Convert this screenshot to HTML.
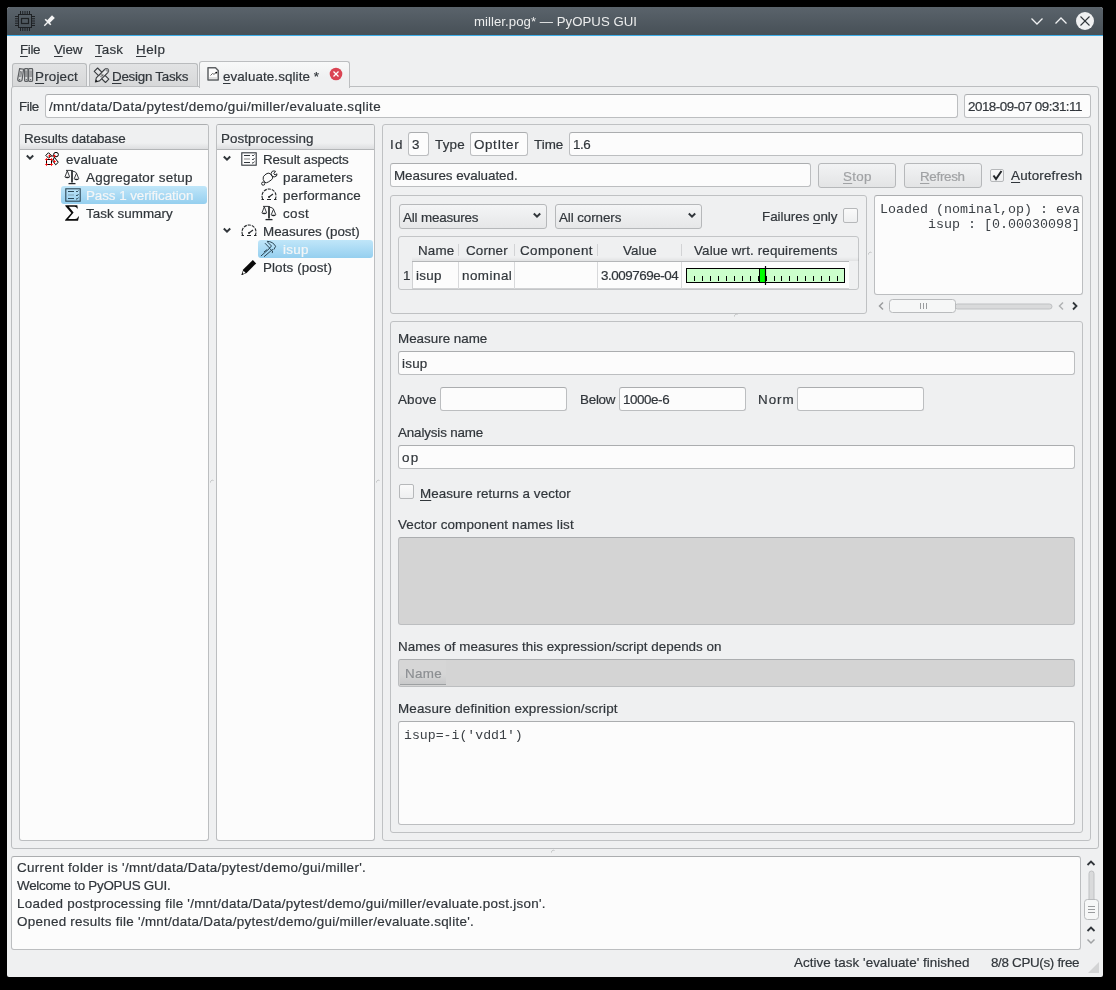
<!DOCTYPE html><html><head><meta charset="utf-8"><style>
*{box-sizing:border-box;margin:0;padding:0}
html,body{width:1116px;height:990px;overflow:hidden;background:#000}
body{position:relative;font-family:'Liberation Sans',sans-serif}
.t{position:absolute;line-height:1;white-space:nowrap;-webkit-text-stroke:0.2px currentColor}
.m{-webkit-text-stroke:0;color:#3c4146 !important}
.b{position:absolute}
.win{position:absolute;left:7px;top:7px;width:1096px;height:970px;background:#eff0f1;border-radius:3px 3px 2px 2px;overflow:hidden}
.edit{position:absolute;background:#fcfcfc;border:1px solid #bcbec0;border-top-color:#abadaf;border-radius:3px}
.grp{position:absolute;border:1px solid #bfc1c3;border-radius:3px}
.btn{position:absolute;border:1px solid #b6b8ba;border-radius:3px;background:linear-gradient(#f2f3f4,#e3e4e5)}
.cb{position:absolute;border:1px solid #b6b8ba;border-radius:2px;background:linear-gradient(#fafafa,#eeeff0)}
u{text-decoration:underline;text-decoration-thickness:1px;text-underline-offset:2px}
</style></head><body><div id="root" style="position:absolute;left:0;top:0;width:1116px;height:990px;will-change:transform"><div class="win"></div>
<div class="b" style="left:7px;top:7px;width:1096px;height:28px;background:linear-gradient(#5a636b,#475057);border-radius:3px 3px 0 0"></div>
<div class="b" style="left:7px;top:35px;width:1096px;height:1px;background:#3daee9"></div>
<div class="t" style="left:474px;top:15px;font-size:13.2px;color:#eceded;font-family:'Liberation Sans', sans-serif;letter-spacing:0.045px;-webkit-text-stroke:0">miller.pog* — PyOPUS GUI</div>
<svg class="b" style="left:0px;top:0px;" width="60" height="36" viewBox="0 0 60 36"><g stroke="#1e2124" stroke-width="1" fill="none"><rect x="18.5" y="14.5" width="13" height="13"/><rect x="21.5" y="18.5" width="7" height="5" stroke-width="1.2"/><line x1="20.5" y1="11" x2="20.5" y2="14"/><line x1="20.5" y1="28" x2="20.5" y2="31"/><line x1="22.75" y1="11" x2="22.75" y2="14"/><line x1="22.75" y1="28" x2="22.75" y2="31"/><line x1="25" y1="11" x2="25" y2="14"/><line x1="25" y1="28" x2="25" y2="31"/><line x1="27.25" y1="11" x2="27.25" y2="14"/><line x1="27.25" y1="28" x2="27.25" y2="31"/><line x1="29.5" y1="11" x2="29.5" y2="14"/><line x1="29.5" y1="28" x2="29.5" y2="31"/><line x1="15" y1="16.5" x2="18" y2="16.5"/><line x1="32" y1="16.5" x2="35" y2="16.5"/><line x1="15" y1="18.75" x2="18" y2="18.75"/><line x1="32" y1="18.75" x2="35" y2="18.75"/><line x1="15" y1="21" x2="18" y2="21"/><line x1="32" y1="21" x2="35" y2="21"/><line x1="15" y1="23.25" x2="18" y2="23.25"/><line x1="32" y1="23.25" x2="35" y2="23.25"/><line x1="15" y1="25.5" x2="18" y2="25.5"/><line x1="32" y1="25.5" x2="35" y2="25.5"/></g><g stroke="#f4f4f4" fill="#f4f4f4"><line x1="44.3" y1="25.7" x2="47.8" y2="22.2" stroke-width="1.3"/><line x1="45.2" y1="19.2" x2="50.8" y2="24.8" stroke-width="1.6"/><path d="M47 20.5 L52 15.3 L54.8 18 L49.5 23.2 Z" stroke="none"/></g></svg>
<svg class="b" style="left:1025px;top:10px;" width="75" height="22" viewBox="0 0 75 22"><g stroke="#f0f1f2" stroke-width="1.3" fill="none"><path d="M6.5 8.5 L12 14 L17.5 8.5"/><path d="M30.5 13.5 L36 8 L41.5 13.5"/></g><circle cx="60" cy="11" r="9" fill="#eff0f1"/><g stroke="#31363b" stroke-width="1.1"><line x1="55.5" y1="6.5" x2="64.5" y2="15.5"/><line x1="64.5" y1="6.5" x2="55.5" y2="15.5"/></g></svg>
<div class="t" style="left:20px;top:43px;font-size:13.4px;color:#31363b;font-family:'Liberation Sans', sans-serif;letter-spacing:-0.359px;"><u>F</u>ile</div>
<div class="t" style="left:54px;top:43px;font-size:13.4px;color:#31363b;font-family:'Liberation Sans', sans-serif;letter-spacing:-0.094px;"><u>V</u>iew</div>
<div class="t" style="left:95px;top:43px;font-size:13.4px;color:#31363b;font-family:'Liberation Sans', sans-serif;letter-spacing:0.156px;"><u>T</u>ask</div>
<div class="t" style="left:136px;top:43px;font-size:13.4px;color:#31363b;font-family:'Liberation Sans', sans-serif;letter-spacing:0.487px;"><u>H</u>elp</div>
<div class="b" style="left:12px;top:63px;width:75px;height:24px;border:1px solid #b9bbbd;border-bottom:none;border-radius:3px 3px 0 0;background:linear-gradient(#e2e3e4,#d6d7d8)"></div>
<div class="b" style="left:89px;top:63px;width:109px;height:24px;border:1px solid #b9bbbd;border-bottom:none;border-radius:3px 3px 0 0;background:linear-gradient(#e2e3e4,#d6d7d8)"></div>
<div class="b" style="left:11px;top:86px;width:1088px;height:763px;border:1px solid #bcbec0;border-radius:3px"></div>
<div class="b" style="left:199px;top:61px;width:151px;height:27px;border:1px solid #bcbec0;border-bottom:none;border-radius:3px 3px 0 0;background:linear-gradient(#f8f9f9,#eff0f1 60%)"></div>
<div class="t" style="left:35px;top:70px;font-size:13.4px;color:#31363b;font-family:'Liberation Sans', sans-serif;letter-spacing:0.187px;"><u>P</u>roject</div>
<div class="t" style="left:112px;top:70px;font-size:13.4px;color:#31363b;font-family:'Liberation Sans', sans-serif;letter-spacing:-0.266px;"><u>D</u>esign Tasks</div>
<div class="t" style="left:223px;top:70px;font-size:13.4px;color:#31363b;font-family:'Liberation Sans', sans-serif;letter-spacing:0.091px;"><u>e</u>valuate.sqlite *</div>
<svg class="b" style="left:14px;top:64px;" width="22" height="22" viewBox="0 0 22 22"><g stroke="#5c5f62" stroke-width="1.2" fill="none"><path d="M5.6 4.6 L9.6 5.2 L8 16.3 Q7.2 17.8 5 17.3 Q3.6 16.5 3.7 15.2 Z"/><rect x="10.6" y="4.6" width="3.4" height="12.8" rx="0.8"/><rect x="14.6" y="4.6" width="4" height="12.8" rx="0.8"/></g><g stroke="#5c5f62" stroke-width="0.7" fill="none"><path d="M11.8 6.5 V13 M12.9 6.5 V13 M16 6.5 V13 M17.2 6.5 V13 M6.6 7 L5.6 13 M7.8 7.2 L6.8 13"/></g><g fill="#5c5f62"><circle cx="12.3" cy="15.6" r="0.7"/><circle cx="16.6" cy="15.6" r="0.7"/><circle cx="5.6" cy="15.8" r="0.8"/></g></svg>
<svg class="b" style="left:91px;top:64px;" width="22" height="22" viewBox="0 0 22 22"><defs><pattern id="chk" width="1.4" height="1.4" patternUnits="userSpaceOnUse"><rect width="0.7" height="0.7" fill="#555"/><rect x="0.7" y="0.7" width="0.7" height="0.7" fill="#555"/></pattern></defs><g stroke="#3a3d40" stroke-width="1.1" fill="#e4e5e6" stroke-linejoin="round"><path d="M3.2 7.3 L6.6 4 L17.8 15.2 L14.5 18.5 Z"/><path d="M5.3 13.8 L13.6 5.5 Q15.3 3.8 17 5.2 Q18.4 6.9 16.8 8.6 L8.5 16.9 L4.4 18 Z" fill="#e9eaeb"/></g><path d="M7.8 11.2 L10.6 8.4 L13.4 11.2 L10.6 14 Z" fill="url(#chk)"/><path d="M13.6 5.5 Q15.3 3.8 17 5.2 Q18.4 6.9 16.8 8.6 Z" fill="#9a9c9e"/><path d="M4.4 18 L5 15.6 L6.8 17.4 Z" fill="#111"/></svg>
<svg class="b" style="left:203px;top:63px;" width="22" height="22" viewBox="0 0 22 22"><g stroke="#5e6164" stroke-width="1.5" fill="#fcfcfc"><path d="M5 4.8 H12.5 L15.2 7.5 V17 H5 Z" stroke-linejoin="round"/></g><path d="M7.5 12.5 L9.5 10.5 L11 11.3 L13.3 9.5" stroke="#666" stroke-width="1" fill="none"/><circle cx="13.3" cy="9.6" r="0.9" fill="#000"/><line x1="6" y1="15" x2="14.5" y2="15" stroke="#c8c8c8" stroke-width="1"/></svg>
<svg class="b" style="left:329px;top:67px;" width="14" height="14" viewBox="0 0 14 14"><circle cx="7" cy="7" r="6.3" fill="#da4453"/><g stroke="#fff" stroke-width="1.3"><line x1="4.5" y1="4.5" x2="9.5" y2="9.5"/><line x1="9.5" y1="4.5" x2="4.5" y2="9.5"/></g></svg>
<div class="t" style="left:19px;top:100px;font-size:13.4px;color:#31363b;font-family:'Liberation Sans', sans-serif;letter-spacing:-0.459px;">File</div>
<div class="edit" style="left:45px;top:94px;width:913px;height:24px;"></div>
<div class="t" style="left:49px;top:100px;font-size:13.4px;color:#31363b;font-family:'Liberation Sans', sans-serif;letter-spacing:0.394px;">/mnt/data/Data/pytest/demo/gui/miller/evaluate.sqlite</div>
<div class="edit" style="left:964px;top:94px;width:127px;height:24px;"></div>
<div class="t" style="left:968px;top:100px;font-size:13.4px;color:#31363b;font-family:'Liberation Sans', sans-serif;letter-spacing:-0.491px;">2018-09-07 09:31:11</div>
<div class="b" style="left:19px;top:124px;width:190px;height:717px;border:1px solid #bcbec0;border-top-color:#acaeb0;border-radius:3px;background:#fcfcfc"></div>
<div class="b" style="left:20px;top:125px;width:188px;height:24px;background:linear-gradient(#eff0f1 75%,#dddee0);border-radius:2px 2px 0 0"></div>
<div class="b" style="left:20px;top:149px;width:188px;height:1px;background:#b4b6b8"></div>
<div class="t" style="left:24px;top:132px;font-size:13.4px;color:#31363b;font-family:'Liberation Sans', sans-serif;letter-spacing:-0.118px;">Results database</div>
<div class="b" style="left:216px;top:124px;width:159px;height:717px;border:1px solid #bcbec0;border-top-color:#acaeb0;border-radius:3px;background:#fcfcfc"></div>
<div class="b" style="left:217px;top:125px;width:157px;height:24px;background:linear-gradient(#eff0f1 75%,#dddee0);border-radius:2px 2px 0 0"></div>
<div class="b" style="left:217px;top:149px;width:157px;height:1px;background:#b4b6b8"></div>
<div class="t" style="left:221px;top:132px;font-size:13.4px;color:#31363b;font-family:'Liberation Sans', sans-serif;letter-spacing:0.073px;">Postprocessing</div>
<div class="b" style="left:61px;top:186px;width:146px;height:18px;background:linear-gradient(#c0e6f9,#95cfef);border-radius:3px"></div>
<div class="b" style="left:258px;top:240px;width:115px;height:18px;background:linear-gradient(#c0e6f9,#95cfef);border-radius:3px"></div>
<div class="t" style="left:66px;top:153px;font-size:13.4px;color:#31363b;font-family:'Liberation Sans', sans-serif;letter-spacing:0.168px;">evaluate</div>
<div class="t" style="left:86px;top:171px;font-size:13.4px;color:#31363b;font-family:'Liberation Sans', sans-serif;letter-spacing:0.251px;">Aggregator setup</div>
<div class="t" style="left:86px;top:189px;font-size:13.4px;color:#f4f6f7;font-family:'Liberation Sans', sans-serif;letter-spacing:-0.070px;">Pass 1 verification</div>
<div class="t" style="left:86px;top:207px;font-size:13.4px;color:#31363b;font-family:'Liberation Sans', sans-serif;letter-spacing:0.045px;">Task summary</div>
<div class="t" style="left:263px;top:153px;font-size:13.4px;color:#31363b;font-family:'Liberation Sans', sans-serif;letter-spacing:-0.156px;">Result aspects</div>
<div class="t" style="left:283px;top:171px;font-size:13.4px;color:#31363b;font-family:'Liberation Sans', sans-serif;letter-spacing:0.219px;">parameters</div>
<div class="t" style="left:283px;top:189px;font-size:13.4px;color:#31363b;font-family:'Liberation Sans', sans-serif;letter-spacing:0.263px;">performance</div>
<div class="t" style="left:283px;top:207px;font-size:13.4px;color:#31363b;font-family:'Liberation Sans', sans-serif;letter-spacing:0.414px;">cost</div>
<div class="t" style="left:263px;top:225px;font-size:13.4px;color:#31363b;font-family:'Liberation Sans', sans-serif;letter-spacing:-0.003px;">Measures (post)</div>
<div class="t" style="left:283px;top:243px;font-size:13.4px;color:#f4f6f7;font-family:'Liberation Sans', sans-serif;letter-spacing:0.278px;">isup</div>
<div class="t" style="left:263px;top:261px;font-size:13.4px;color:#31363b;font-family:'Liberation Sans', sans-serif;letter-spacing:0.107px;">Plots (post)</div>
<svg class="b" style="left:25px;top:153px;" width="10" height="8" viewBox="0 0 10 8"><path d="M1.8 2.5 L5 5.7 L8.2 2.5" stroke="#31363b" stroke-width="2" fill="none"/></svg>
<svg class="b" style="left:222px;top:154px;" width="10" height="8" viewBox="0 0 10 8"><path d="M1.8 2.5 L5 5.7 L8.2 2.5" stroke="#31363b" stroke-width="2" fill="none"/></svg>
<svg class="b" style="left:222px;top:226px;" width="10" height="8" viewBox="0 0 10 8"><path d="M1.8 2.5 L5 5.7 L8.2 2.5" stroke="#31363b" stroke-width="2" fill="none"/></svg>
<svg class="b" style="left:42px;top:150px;" width="20" height="18" viewBox="0 0 20 18"><g stroke="#000" stroke-width="1" fill="none"><rect x="4.5" y="9.5" width="5" height="5"/><path d="M3.8 5.4 L6.5 2.7 L9.3 5.5 L6.6 8.2 Z"/><line x1="9" y1="6" x2="12.5" y2="6"/><ellipse cx="14" cy="4.6" rx="2.4" ry="2.2"/><path d="M12.3 7.2 L16.3 12.3 L13.7 14.8 L10.8 11 Z"/></g><path d="M4.5 7.7 L5.1 8.9 L6.3 9.5 L5.1 10.1 L4.5 11.3 L3.9 10.1 L2.7 9.5 L3.9 8.9 Z" fill="#ff0000"/><path d="M9.5 7.7 L10.1 8.9 L11.3 9.5 L10.1 10.1 L9.5 11.3 L8.9 10.1 L7.7 9.5 L8.9 8.9 Z" fill="#ff0000"/><path d="M4.5 12.7 L5.1 13.9 L6.3 14.5 L5.1 15.1 L4.5 16.3 L3.9 15.1 L2.7 14.5 L3.9 13.9 Z" fill="#ff0000"/><path d="M9.5 12.7 L10.1 13.9 L11.3 14.5 L10.1 15.1 L9.5 16.3 L8.9 15.1 L7.7 14.5 L8.9 13.9 Z" fill="#ff0000"/><path d="M7.5 4.2 L8.1 5.4 L9.3 6 L8.1 6.6 L7.5 7.8 L6.9 6.6 L5.7 6 L6.9 5.4 Z" fill="#ff0000"/><path d="M12.5 4.2 L13.1 5.4 L14.3 6 L13.1 6.6 L12.5 7.8 L11.9 6.6 L10.7 6 L11.9 5.4 Z" fill="#ff0000"/><path d="M12.5 9.7 L13.1 10.9 L14.3 11.5 L13.1 12.1 L12.5 13.3 L11.9 12.1 L10.7 11.5 L11.9 10.9 Z" fill="#ff0000"/></svg>
<svg class="b" style="left:62px;top:168px;" width="20" height="18" viewBox="0 0 20 18"><g stroke="#232629" fill="none" stroke-width="0.9"><path d="M4 2.4 L9.5 2.4 M10.5 3.1 Q13.3 3.4 14.8 5.3"/><path d="M5.3 2.8 L3 8.8 M5.3 2.8 L7.6 8.8 M14.5 5.2 L12.2 10.8 M14.5 5.2 L16.8 10.8"/></g><line x1="10" y1="2" x2="10" y2="14.5" stroke="#232629" stroke-width="1.7"/><line x1="6.5" y1="15.6" x2="13.5" y2="15.6" stroke="#232629" stroke-width="1.3"/><path d="M2.4 8.7 Q5.3 12 8.2 8.7 Z" fill="#232629"/><path d="M11.7 10.7 Q14.5 14 17.3 10.7 Z" fill="#232629"/></svg>
<svg class="b" style="left:259px;top:204px;" width="20" height="18" viewBox="0 0 20 18"><g stroke="#232629" fill="none" stroke-width="0.9"><path d="M4 2.4 L9.5 2.4 M10.5 3.1 Q13.3 3.4 14.8 5.3"/><path d="M5.3 2.8 L3 8.8 M5.3 2.8 L7.6 8.8 M14.5 5.2 L12.2 10.8 M14.5 5.2 L16.8 10.8"/></g><line x1="10" y1="2" x2="10" y2="14.5" stroke="#232629" stroke-width="1.7"/><line x1="6.5" y1="15.6" x2="13.5" y2="15.6" stroke="#232629" stroke-width="1.3"/><path d="M2.4 8.7 Q5.3 12 8.2 8.7 Z" fill="#232629"/><path d="M11.7 10.7 Q14.5 14 17.3 10.7 Z" fill="#232629"/></svg>
<svg class="b" style="left:62px;top:186px;" width="20" height="18" viewBox="0 0 20 18"><rect x="3.8" y="2.8" width="14.4" height="12.4" stroke="#2c4756" stroke-width="1.1" fill="none"/><g stroke="#2c4756" stroke-width="1"><line x1="6" y1="5.5" x2="12" y2="5.5"/><line x1="6" y1="12.5" x2="12" y2="12.5"/></g><line x1="6" y1="9" x2="12" y2="9" stroke="#8fb3c8" stroke-width="1.4"/><path d="M14 5 L15 6 L16.5 4.5 M14 9 L15 10 L16.5 8 M14 12.5 L15 13.3 L16.5 11.5" stroke="#2c4756" stroke-width="0.9" fill="none"/></svg>
<svg class="b" style="left:238px;top:150px;" width="20" height="18" viewBox="0 0 20 18"><rect x="3.8" y="2.8" width="14.4" height="12.4" stroke="#31363b" stroke-width="1.1" fill="none"/><g stroke="#31363b" stroke-width="1"><line x1="6" y1="5.5" x2="12" y2="5.5"/><line x1="6" y1="12.5" x2="12" y2="12.5"/></g><line x1="6" y1="9" x2="12" y2="9" stroke="#a8a8a8" stroke-width="1.4"/><path d="M14 5 L15 6 L16.5 4.5 M14 9 L15 10 L16.5 8 M14 12.5 L15 13.3 L16.5 11.5" stroke="#31363b" stroke-width="0.9" fill="none"/></svg>
<svg class="b" style="left:62px;top:204px;" width="20" height="18" viewBox="0 0 20 18"><path d="M3.3 1.2 H15.3 L15.8 4.4 H15.1 Q14.6 2.8 12.6 2.8 H6.8 L11.6 8.6 L6.2 14.9 H13 Q15.4 14.9 16.3 12.4 H17 L16 16.8 H3.1 V16.1 L9.3 8.9 L3.3 2 Z" fill="#0a0a0a"/></svg>
<svg class="b" style="left:259px;top:186px;" width="20" height="18" viewBox="0 0 20 18"><g stroke="#232629" fill="none" stroke-width="1.1"><path d="M3.66 12.96 A7 7 0 1 1 16.34 12.96" stroke-dasharray="3.2 1"/><line x1="10" y1="11" x2="14" y2="8" /><path d="M2.5 13.5 H5 M8 13.5 H12 M15 13.5 H17.5"/></g><circle cx="10" cy="11" r="1" fill="#232629"/></svg>
<svg class="b" style="left:239px;top:222px;" width="20" height="18" viewBox="0 0 20 18"><g stroke="#232629" fill="none" stroke-width="1.1"><path d="M3.66 12.96 A7 7 0 1 1 16.34 12.96" stroke-dasharray="3.2 1"/><line x1="10" y1="11" x2="14" y2="8" /><path d="M2.5 13.5 H5 M8 13.5 H12 M15 13.5 H17.5"/></g><circle cx="10" cy="11" r="1" fill="#232629"/></svg>
<svg class="b" style="left:259px;top:167px;" width="20" height="20" viewBox="0 0 20 20"><g stroke="#232629" stroke-width="1" fill="none"><path d="M4.2 12.5 Q3.5 9.5 6 7.8 L8 6.5 Q10 5.5 11.5 7 L13.5 9.3 Q14.3 11.3 12.5 12.8 L9.3 15 Q7.5 16.3 5.8 15.3 Z"/><circle cx="4.2" cy="16.6" r="1.6"/><path d="M13.2 4.3 Q11 6.5 12.8 9.2 Q15.3 10.8 17.5 9 L18 6.8 L16 8 L14.8 6.7 L16.5 4.3 Q15 3.5 13.2 4.3 Z"/></g></svg>
<svg class="b" style="left:258px;top:238px;" width="20" height="20" viewBox="0 0 20 20"><g stroke="#2c4756" stroke-width="1" fill="none" stroke-linecap="round"><path d="M3.2 17.8 L12 10 M6.3 18.5 L14.5 11.5"/><path d="M9.3 3.3 Q15 3.5 17.6 8.3 L16 11.3"/><path d="M7.3 5.5 L11.6 10 M9.8 4.3 L13.5 8 L11.6 10"/><path d="M6.2 13.8 L8.8 11.8 M14.5 13.2 L12.5 11.5 M14.5 13.2 L14.3 14.7"/></g></svg>
<svg class="b" style="left:239px;top:257px;" width="20" height="20" viewBox="0 0 20 20"><path d="M2.5 18 L4.2 12.6 L13.8 3 L17.2 6.4 L7.6 16 Z" fill="#0a0a0a"/><path d="M3.4 17 L4.5 13.8 L6.6 15.9 Z" fill="#fcfcfc"/><path d="M2.5 18 L3.2 15.8 L4.6 17.2 Z" fill="#0a0a0a"/></svg>
<div class="grp" style="left:382px;top:124px;width:709px;height:717px;"></div>
<div class="t" style="left:390px;top:138px;font-size:13.4px;color:#31363b;font-family:'Liberation Sans', sans-serif;letter-spacing:1.232px;">Id</div>
<div class="edit" style="left:408px;top:132px;width:21px;height:24px;"></div>
<div class="t" style="left:412px;top:138px;font-size:13.4px;color:#31363b;font-family:'Liberation Sans', sans-serif;letter-spacing:0.253px;">3</div>
<div class="t" style="left:435px;top:138px;font-size:13.4px;color:#31363b;font-family:'Liberation Sans', sans-serif;letter-spacing:0.190px;">Type</div>
<div class="edit" style="left:470px;top:132px;width:58px;height:24px;"></div>
<div class="t" style="left:474px;top:138px;font-size:13.4px;color:#31363b;font-family:'Liberation Sans', sans-serif;letter-spacing:0.612px;">OptIter</div>
<div class="t" style="left:534px;top:138px;font-size:13.4px;color:#31363b;font-family:'Liberation Sans', sans-serif;letter-spacing:0.014px;">Time</div>
<div class="edit" style="left:569px;top:132px;width:514px;height:24px;"></div>
<div class="t" style="left:573px;top:138px;font-size:13.4px;color:#31363b;font-family:'Liberation Sans', sans-serif;letter-spacing:-0.507px;">1.6</div>
<div class="edit" style="left:390px;top:163px;width:421px;height:24px;"></div>
<div class="t" style="left:394px;top:169px;font-size:13.4px;color:#31363b;font-family:'Liberation Sans', sans-serif;letter-spacing:-0.039px;">Measures evaluated.</div>
<div class="btn" style="left:818px;top:163px;width:78px;height:25px;"></div>
<div class="t" style="left:843px;top:170px;font-size:13.4px;color:#a0a2a4;font-family:'Liberation Sans', sans-serif;letter-spacing:0.285px;"><u>S</u>top</div>
<div class="btn" style="left:904px;top:163px;width:78px;height:25px;"></div>
<div class="t" style="left:920px;top:170px;font-size:13.4px;color:#a0a2a4;font-family:'Liberation Sans', sans-serif;letter-spacing:-0.314px;"><u>R</u>efresh</div>
<div class="cb" style="left:990px;top:169px;width:14px;height:13px;"></div>
<div class="t" style="left:1011px;top:169px;font-size:13.4px;color:#31363b;font-family:'Liberation Sans', sans-serif;letter-spacing:0.188px;"><u>A</u>utorefresh</div>
<svg class="b" style="left:990px;top:169px;" width="15" height="14" viewBox="0 0 15 14"><path d="M3.5 6.5 L6 10 L11.5 2" stroke="#232629" stroke-width="2" fill="none"/></svg>
<div class="grp" style="left:390px;top:195px;width:477px;height:119px;"></div>
<div class="btn" style="left:399px;top:204px;width:148px;height:25px;background:linear-gradient(#f4f5f6,#e6e7e8)"></div>
<div class="t" style="left:403px;top:211px;font-size:13.4px;color:#31363b;font-family:'Liberation Sans', sans-serif;letter-spacing:-0.172px;">All measures</div>
<svg class="b" style="left:532px;top:211px;" width="10" height="8" viewBox="0 0 10 8"><path d="M1.8 2.5 L5 5.7 L8.2 2.5" stroke="#31363b" stroke-width="2" fill="none"/></svg>
<div class="btn" style="left:555px;top:204px;width:147px;height:25px;background:linear-gradient(#f4f5f6,#e6e7e8)"></div>
<div class="t" style="left:559px;top:211px;font-size:13.4px;color:#31363b;font-family:'Liberation Sans', sans-serif;letter-spacing:-0.085px;">All corners</div>
<svg class="b" style="left:687px;top:211px;" width="10" height="8" viewBox="0 0 10 8"><path d="M1.8 2.5 L5 5.7 L8.2 2.5" stroke="#31363b" stroke-width="2" fill="none"/></svg>
<div class="t" style="left:762px;top:210px;font-size:13.4px;color:#31363b;font-family:'Liberation Sans', sans-serif;letter-spacing:-0.043px;">Failures <u>o</u>nly</div>
<div class="cb" style="left:843px;top:208px;width:15px;height:15px;"></div>
<div class="b" style="left:398px;top:236px;width:461px;height:54px;border:1px solid #c3c5c7;border-radius:3px"></div>
<div class="b" style="left:412px;top:257px;width:447px;height:4px;background:linear-gradient(rgba(0,0,0,0),rgba(0,0,0,0.06))"></div>
<div class="b" style="left:412px;top:261px;width:437px;height:1px;background:#b4b6b8"></div>
<div class="b" style="left:412px;top:262px;width:437px;height:27px;background:#fcfcfc;border-left:1px solid #d0d1d3;border-bottom:1px solid #d0d1d3"></div>
<div class="b" style="left:458px;top:262px;width:1px;height:27px;background:#d8d9db"></div>
<div class="b" style="left:514px;top:262px;width:1px;height:27px;background:#d8d9db"></div>
<div class="b" style="left:597px;top:262px;width:1px;height:27px;background:#d8d9db"></div>
<div class="b" style="left:681px;top:262px;width:1px;height:27px;background:#d8d9db"></div>
<div class="b" style="left:458px;top:244px;width:1px;height:12px;background:#d2d3d5"></div>
<div class="b" style="left:514px;top:244px;width:1px;height:12px;background:#d2d3d5"></div>
<div class="b" style="left:597px;top:244px;width:1px;height:12px;background:#d2d3d5"></div>
<div class="b" style="left:681px;top:244px;width:1px;height:12px;background:#d2d3d5"></div>
<div class="t" style="left:418px;top:244px;font-size:13.4px;color:#31363b;font-family:'Liberation Sans', sans-serif;letter-spacing:0.160px;">Name</div>
<div class="t" style="left:466px;top:244px;font-size:13.4px;color:#31363b;font-family:'Liberation Sans', sans-serif;letter-spacing:0.134px;">Corner</div>
<div class="t" style="left:520px;top:244px;font-size:13.4px;color:#31363b;font-family:'Liberation Sans', sans-serif;letter-spacing:0.409px;">Component</div>
<div class="t" style="left:623px;top:244px;font-size:13.4px;color:#31363b;font-family:'Liberation Sans', sans-serif;letter-spacing:0.112px;">Value</div>
<div class="t" style="left:694px;top:244px;font-size:13.4px;color:#31363b;font-family:'Liberation Sans', sans-serif;letter-spacing:0.136px;">Value wrt. requirements</div>
<div class="t" style="left:403px;top:269px;font-size:13.4px;color:#31363b;font-family:'Liberation Sans', sans-serif;">1</div>
<div class="t" style="left:416px;top:269px;font-size:13.4px;color:#31363b;font-family:'Liberation Sans', sans-serif;letter-spacing:0.312px;">isup</div>
<div class="t" style="left:462px;top:269px;font-size:13.4px;color:#31363b;font-family:'Liberation Sans', sans-serif;letter-spacing:0.484px;">nominal</div>
<div class="t" style="left:601px;top:269px;font-size:13.4px;color:#31363b;font-family:'Liberation Sans', sans-serif;letter-spacing:-0.441px;">3.009769e-04</div>
<svg class="b" style="left:686px;top:265px;" width="160" height="21" viewBox="0 0 160 21"><rect x="0.5" y="3.5" width="158" height="14" fill="#ccffcc" stroke="#000"/><rect x="73.5" y="3.5" width="6" height="14" fill="#00ff00" stroke="#000"/><g stroke="#000" stroke-width="1"><line x1="8.5" y1="11" x2="8.5" y2="16"/><line x1="16.5" y1="11" x2="16.5" y2="16"/><line x1="24.5" y1="11" x2="24.5" y2="16"/><line x1="32.5" y1="11" x2="32.5" y2="16"/><line x1="40.5" y1="11" x2="40.5" y2="16"/><line x1="48.5" y1="11" x2="48.5" y2="16"/><line x1="56.5" y1="11" x2="56.5" y2="16"/><line x1="64.5" y1="11" x2="64.5" y2="16"/><line x1="72.5" y1="11" x2="72.5" y2="16"/><line x1="80.5" y1="11" x2="80.5" y2="16"/><line x1="88.5" y1="11" x2="88.5" y2="16"/><line x1="95.5" y1="11" x2="95.5" y2="16"/><line x1="103.5" y1="11" x2="103.5" y2="16"/><line x1="111.5" y1="11" x2="111.5" y2="16"/><line x1="119.5" y1="11" x2="119.5" y2="16"/><line x1="127.5" y1="11" x2="127.5" y2="16"/><line x1="135.5" y1="11" x2="135.5" y2="16"/><line x1="143.5" y1="11" x2="143.5" y2="16"/><line x1="151.5" y1="11" x2="151.5" y2="16"/></g><line x1="79.5" y1="1" x2="79.5" y2="20" stroke="#000" stroke-width="1.2"/></svg>
<div class="edit" style="left:874px;top:195px;width:209px;height:100px;"></div>
<div class="t m" style="left:880px;top:203px;font-size:13.33px;color:#31363b;font-family:'Liberation Mono', monospace;">Loaded (nominal,op) : eva</div>
<div class="t m" style="left:880px;top:218px;font-size:13.33px;color:#31363b;font-family:'Liberation Mono', monospace;white-space:pre">      isup : [0.00030098]</div>
<svg class="b" style="left:876px;top:299px;" width="210" height="16" viewBox="0 0 210 16"><path d="M7 3.5 L3.5 7 L7 10.5" stroke="#9a9c9e" stroke-width="1.5" fill="none"/><rect x="79" y="5" width="97" height="5" rx="2.5" fill="#d9dadb" stroke="#bfc1c3"/><rect x="13.5" y="0.5" width="66" height="13" rx="3" fill="#f6f7f7" stroke="#b9bbbd"/><g stroke="#9a9c9e"><line x1="44.5" y1="4" x2="44.5" y2="10"/><line x1="47.5" y1="4" x2="47.5" y2="10"/><line x1="50.5" y1="4" x2="50.5" y2="10"/></g><path d="M187 3.5 L183.5 7 L187 10.5" stroke="#b0b2b4" stroke-width="1.5" fill="none"/><path d="M197 3.5 L200.5 7 L197 10.5" stroke="#31363b" stroke-width="1.8" fill="none"/></svg>
<div class="grp" style="left:390px;top:321px;width:693px;height:512px;"></div>
<div class="t" style="left:398px;top:332px;font-size:13.4px;color:#31363b;font-family:'Liberation Sans', sans-serif;letter-spacing:-0.001px;">Measure name</div>
<div class="edit" style="left:398px;top:351px;width:677px;height:24px;"></div>
<div class="t" style="left:402px;top:357px;font-size:13.4px;color:#31363b;font-family:'Liberation Sans', sans-serif;letter-spacing:0.245px;">isup</div>
<div class="t" style="left:398px;top:393px;font-size:13.4px;color:#31363b;font-family:'Liberation Sans', sans-serif;letter-spacing:0.133px;">Above</div>
<div class="edit" style="left:440px;top:387px;width:127px;height:24px;"></div>
<div class="t" style="left:580px;top:393px;font-size:13.4px;color:#31363b;font-family:'Liberation Sans', sans-serif;letter-spacing:-0.243px;">Below</div>
<div class="edit" style="left:619px;top:387px;width:127px;height:24px;"></div>
<div class="t" style="left:623px;top:393px;font-size:13.4px;color:#31363b;font-family:'Liberation Sans', sans-serif;letter-spacing:-0.424px;">1000e-6</div>
<div class="t" style="left:758px;top:393px;font-size:13.4px;color:#31363b;font-family:'Liberation Sans', sans-serif;letter-spacing:0.956px;">Norm</div>
<div class="edit" style="left:797px;top:387px;width:127px;height:24px;"></div>
<div class="t" style="left:398px;top:426px;font-size:13.4px;color:#31363b;font-family:'Liberation Sans', sans-serif;letter-spacing:-0.148px;">Analysis name</div>
<div class="edit" style="left:398px;top:445px;width:677px;height:24px;"></div>
<div class="t" style="left:402px;top:451px;font-size:13.4px;color:#31363b;font-family:'Liberation Sans', sans-serif;letter-spacing:1.406px;">op</div>
<div class="cb" style="left:399px;top:484px;width:15px;height:15px;"></div>
<div class="t" style="left:420px;top:487px;font-size:13.4px;color:#31363b;font-family:'Liberation Sans', sans-serif;letter-spacing:0.081px;"><u>M</u>easure returns a vector</div>
<div class="t" style="left:398px;top:518px;font-size:13.4px;color:#31363b;font-family:'Liberation Sans', sans-serif;letter-spacing:0.141px;">Vector component names list</div>
<div class="edit" style="left:398px;top:537px;width:677px;height:88px;background:#d4d4d4"></div>
<div class="t" style="left:398px;top:640px;font-size:13.4px;color:#31363b;font-family:'Liberation Sans', sans-serif;letter-spacing:0.024px;">Names of measures this expression/script depends on</div>
<div class="edit" style="left:398px;top:659px;width:677px;height:28px;background:#d4d4d4"></div>
<div class="b" style="left:400px;top:660px;width:46px;height:24px;background:linear-gradient(#d6d6d6 60%,#c8c9ca)"></div>
<div class="b" style="left:400px;top:684px;width:46px;height:1px;background:#9da0a2"></div>
<div class="t" style="left:405px;top:667px;font-size:13.4px;color:#8c8f92;font-family:'Liberation Sans', sans-serif;letter-spacing:0.360px;">Name</div>
<div class="t" style="left:398px;top:702px;font-size:13.4px;color:#31363b;font-family:'Liberation Sans', sans-serif;letter-spacing:0.171px;">Measure definition expression/script</div>
<div class="edit" style="left:398px;top:721px;width:677px;height:104px;"></div>
<div class="t m" style="left:404px;top:729px;font-size:13.2px;color:#31363b;font-family:'Liberation Mono', monospace;">isup=-i('vdd1')</div>
<div class="edit" style="left:11px;top:856px;width:1070px;height:94px;"></div>
<div class="t" style="left:17px;top:861px;font-size:13.4px;color:#31363b;font-family:'Liberation Sans', sans-serif;letter-spacing:0.337px;">Current folder is '/mnt/data/Data/pytest/demo/gui/miller'.</div>
<div class="t" style="left:17px;top:879px;font-size:13.4px;color:#31363b;font-family:'Liberation Sans', sans-serif;letter-spacing:-0.257px;">Welcome to PyOPUS GUI.</div>
<div class="t" style="left:17px;top:897px;font-size:13.4px;color:#31363b;font-family:'Liberation Sans', sans-serif;letter-spacing:0.272px;">Loaded postprocessing file '/mnt/data/Data/pytest/demo/gui/miller/evaluate.post.json'.</div>
<div class="t" style="left:17px;top:915px;font-size:13.4px;color:#31363b;font-family:'Liberation Sans', sans-serif;letter-spacing:0.285px;">Opened results file '/mnt/data/Data/pytest/demo/gui/miller/evaluate.sqlite'.</div>
<svg class="b" style="left:1082px;top:856px;" width="20" height="92" viewBox="0 0 20 92"><path d="M5.5 9 L9 5.5 L12.5 9" stroke="#31363b" stroke-width="1.8" fill="none"/><rect x="7" y="15" width="5" height="35" rx="2.5" fill="#d9dadb" stroke="#bfc1c3"/><rect x="2.5" y="43.5" width="14" height="20" rx="3" fill="#f6f7f7" stroke="#b9bbbd"/><g stroke="#9a9c9e"><line x1="6" y1="50.5" x2="13" y2="50.5"/><line x1="6" y1="53.5" x2="13" y2="53.5"/><line x1="6" y1="56.5" x2="13" y2="56.5"/></g><path d="M5.5 75 L9 71.5 L12.5 75" stroke="#31363b" stroke-width="1.8" fill="none"/><path d="M5.5 83.5 L9 87 L12.5 83.5" stroke="#a0a2a4" stroke-width="1.5" fill="none"/></svg>
<div class="t" style="left:794px;top:956px;font-size:13.4px;color:#31363b;font-family:'Liberation Sans', sans-serif;letter-spacing:0.047px;">Active task 'evaluate' finished</div>
<div class="t" style="left:991px;top:956px;font-size:13.4px;color:#31363b;font-family:'Liberation Sans', sans-serif;letter-spacing:-0.323px;">8/8 CPU(s) free</div>
<svg class="b" style="left:1087px;top:961px;" width="13" height="13" viewBox="0 0 13 13"><path d="M12 1 L12 12 L1 12 Z" fill="#d3d4d5"/></svg>
<svg class="b" style="left:209px;top:479px;" width="6" height="6" viewBox="0 0 6 6"><path d="M1.5 3.5 A2 2 0 0 1 4.5 1.5" stroke="#b4b6b8" stroke-width="0.8" fill="none"/></svg>
<svg class="b" style="left:375px;top:479px;" width="6" height="6" viewBox="0 0 6 6"><path d="M1.5 3.5 A2 2 0 0 1 4.5 1.5" stroke="#b4b6b8" stroke-width="0.8" fill="none"/></svg>
<svg class="b" style="left:867px;top:251px;" width="6" height="6" viewBox="0 0 6 6"><path d="M1.5 3.5 A2 2 0 0 1 4.5 1.5" stroke="#b4b6b8" stroke-width="0.8" fill="none"/></svg>
<svg class="b" style="left:733px;top:313px;" width="6" height="6" viewBox="0 0 6 6"><path d="M1.5 3.5 A2 2 0 0 1 4.5 1.5" stroke="#b4b6b8" stroke-width="0.8" fill="none"/></svg>
<svg class="b" style="left:550px;top:849px;" width="6" height="6" viewBox="0 0 6 6"><path d="M1.5 3.5 A2 2 0 0 1 4.5 1.5" stroke="#b4b6b8" stroke-width="0.8" fill="none"/></svg></div></body></html>
